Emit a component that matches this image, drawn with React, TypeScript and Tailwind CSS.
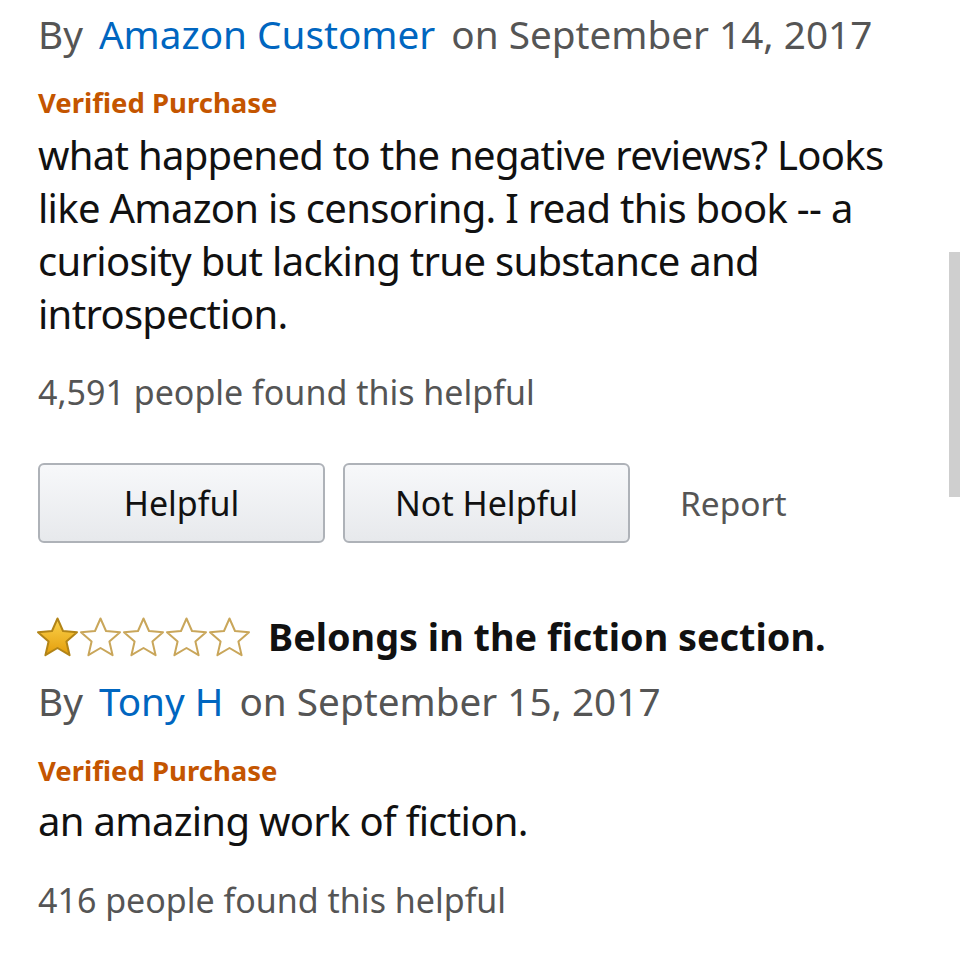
import React from "react";

const Star = ({ filled }: { filled: boolean }) => (
  <svg width="43" height="41" viewBox="0 0 43 41" className="shrink-0">
    <defs>
      <linearGradient id="sg" x1="0" y1="0" x2="0" y2="1">
        <stop offset="0" stopColor="#fcd34d" />
        <stop offset="1" stopColor="#e39d0a" />
      </linearGradient>
    </defs>
    <path
      d="M21.5 1.5 L27 14 L41 15.2 L30.4 24.4 L33.6 38.2 L21.5 31 L9.4 38.2 L12.6 24.4 L2 15.2 L16 14 Z"
      fill={filled ? "url(#sg)" : "#ffffff"}
      stroke={filled ? "#b28417" : "#c9a65a"}
      strokeWidth="2"
      strokeLinejoin="round"
    />
  </svg>
);

const font = { fontFamily: '"Noto Sans", "Open Sans", sans-serif' };

function Btn({ label }: { label: string }) {
  return (
    <div className="w-[287px] h-[80px] rounded-[6px] border-2 border-[#aeb2b8] bg-gradient-to-b from-[#f7f8fa] to-[#e7e9ec] flex items-center justify-center text-[34px] text-[#111]">
      {label}
    </div>
  );
}

export default function App() {
  return (
    <div className="relative w-[960px] h-[960px] bg-white overflow-hidden" style={font}>
      <div className="absolute right-0 top-[252px] w-[11px] h-[245px] bg-[#cfcfcf]" />
      <div className="pl-[38px] pr-[40px] flex flex-col">
        <div className="h-[68px] flex items-center text-[38.7px] text-[#555] whitespace-nowrap">
          <span>By</span>
          <span className="ml-[16px] text-[#0066c0]">Amazon Customer</span>
          <span className="ml-[16px]">on September 14, 2017</span>
        </div>
        <div className="mt-[15px] h-[40px] flex items-center text-[27.5px] font-bold text-[#c45500]">Verified Purchase</div>
        <div className="mt-[5px] text-[40px] leading-[53px] text-[#111] tracking-[-0.7px] whitespace-nowrap">
          what happened to the negative reviews? Looks<br />like Amazon is censoring. I read this book -- a<br />curiosity but lacking true substance and<br />introspection.
        </div>
        <div className="mt-[27px] text-[34px] text-[#555] h-[50px] flex items-center">4,591 people found this helpful</div>
        <div className="mt-[46px] flex items-center gap-[18px]">
          <Btn label="Helpful" />
          <Btn label="Not Helpful" />
          <div className="ml-[32px] text-[33.5px] text-[#555]">Report</div>
        </div>
        <div className="mt-[72px] flex items-center h-[44px]">
          <div className="flex -ml-[2px]">
            <Star filled />
            <Star filled={false} />
            <Star filled={false} />
            <Star filled={false} />
            <Star filled={false} />
          </div>
          <div className="ml-[17px] text-[37.8px] font-bold text-[#111] whitespace-nowrap">Belongs in the fiction section.</div>
        </div>
        <div className="mt-[20px] h-[44px] flex items-center text-[38.7px] text-[#555] whitespace-nowrap">
          <span>By</span>
          <span className="ml-[16px] text-[#0066c0]">Tony H</span>
          <span className="ml-[16px]">on September 15, 2017</span>
        </div>
        <div className="mt-[28px] h-[40px] flex items-center text-[27.5px] font-bold text-[#c45500]">Verified Purchase</div>
        <div className="mt-[3px] text-[40px] leading-[53px] text-[#111] tracking-[-0.7px]">an amazing work of fiction.</div>
        <div className="mt-[28px] text-[34px] text-[#555] h-[50px] flex items-center">416 people found this helpful</div>
      </div>
    </div>
  );
}
